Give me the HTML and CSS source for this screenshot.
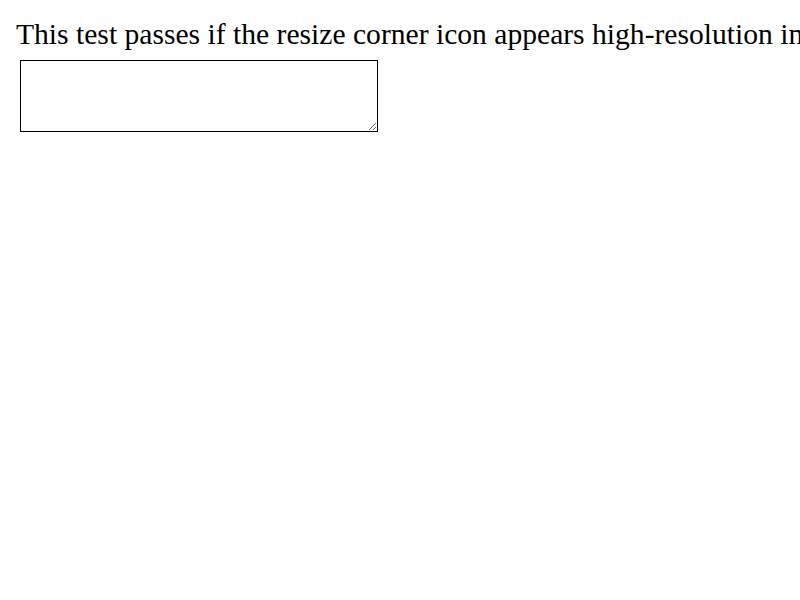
FILE: index.html
```html
<!DOCTYPE html>
<html>
<head>
<meta charset="utf-8">
<link rel="stylesheet" href="styles.css">
</head>
<body>
<div class="caption">This test passes if the resize corner icon appears high-resolution in</div>
<textarea class="box"></textarea>
</body>
</html>
```
FILE: styles.css
```css
html, body {
  margin: 0;
  background: #fff;
  overflow: hidden;
}
body {
  padding: 16px;
  font-family: "Liberation Serif", "Times New Roman", serif;
  color: #000;
}
.caption {
  font-size: 29.6px;
  line-height: 36px;
  white-space: nowrap;
  -webkit-font-smoothing: none;
}
.box {
  display: block;
  box-sizing: border-box;
  width: 358px;
  height: 72px;
  margin: 8px 0 0 4px;
  padding: 0;
  border: 1px solid #000;
  background: #fff;
  resize: both;
  outline: none;
}
```
